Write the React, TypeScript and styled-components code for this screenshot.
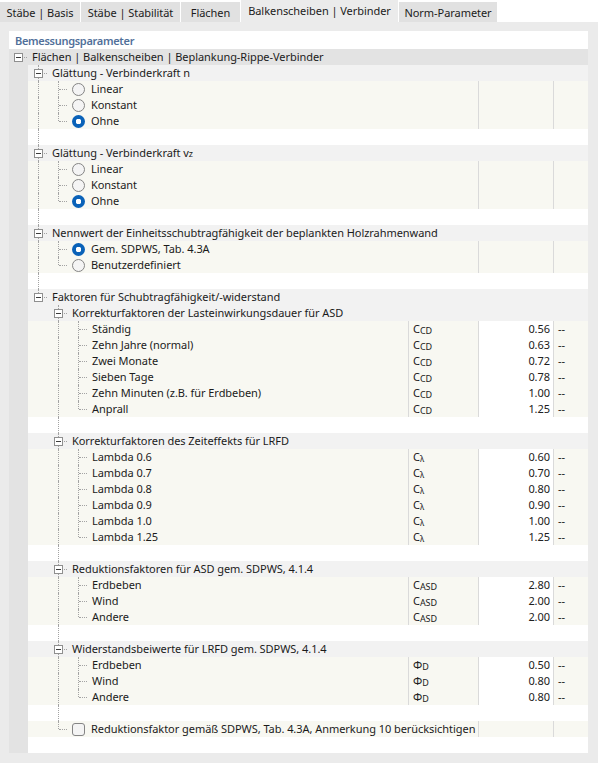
import React from 'react'
import styled, { createGlobalStyle, css } from 'styled-components'

const GlobalStyle = createGlobalStyle`
    * { box-sizing: border-box; }
    html, body {
        margin: 0;
        padding: 0;
        background: #ffffff;
    }
    body {
        font-family: 'Noto Sans', 'Open Sans', sans-serif;
        font-size: 11px;
        letter-spacing: -0.05px;
        color: #1b1b1b;
    }
`

type TreeNode = {
    label: React.ReactNode
    control?: 'radio' | 'check'
    checked?: boolean
    sym?: [string, string]
    value?: string
    children?: TreeNode[]
}

type FlatRow =
    | { kind: 'node'; depth: number; node: TreeNode; guides: boolean[]; hasNext: boolean }
    | { kind: 'spacer'; depth: number; guides: boolean[] }

const Window = styled.div`
    display: flex;
    flex-direction: column;
    width: 598px;
    height: 763px;
    overflow: hidden;
    background: #ffffff;
`

const TabBar = styled.div`
    display: flex;
    align-items: flex-end;
    gap: 1px;
    height: 22px;
    flex: none;
`

const Tab = styled.div<{ $active?: boolean; $w: number }>`
    display: flex;
    align-items: center;
    justify-content: center;
    width: ${p => p.$w}px;
    height: ${p => (p.$active ? 22 : 20)}px;
    padding-bottom: ${p => (p.$active ? 2 : 0)}px;
    background: ${p => (p.$active ? '#ebebeb' : '#e1e1e1')};
    white-space: nowrap;
`

const Panel = styled.div`
    flex: 1;
    display: flex;
    flex-direction: column;
    background: #ebebeb;
    padding: 9px 10px 10px 9px;
`

const Sheet = styled.div`
    flex: 1;
    display: flex;
    flex-direction: column;
    background: #ffffff;
`

const SheetTitle = styled.div`
    display: flex;
    align-items: center;
    height: 18px;
    padding-left: 6px;
    color: #51709a;
    font-weight: 600;
    letter-spacing: -0.3px;
`

const toneBg = {
    root: '#e3e3e3',
    group: '#f2f2f2',
    leaf: '#f8f8f2',
    blank: '#ffffff',
}

const Row = styled.div<{ $tone: keyof typeof toneBg }>`
    display: flex;
    height: 16px;
    line-height: 16px;
    background: ${p => toneBg[p.$tone]};
`

const dotted = '1px dotted #a3a3a3'

const Cell = styled.div<{ $first?: boolean; $gutter?: boolean; $line?: boolean }>`
    position: relative;
    flex: none;
    display: flex;
    align-items: center;
    width: ${p => (p.$first ? 19 : 20)}px;
    height: 100%;
    background: ${p => (p.$gutter ? toneBg.root : 'transparent')};
    ${p =>
        p.$line &&
        css`
            &::before {
                content: '';
                position: absolute;
                top: 0;
                bottom: 0;
                left: ${p.$first ? 9 : 10}px;
                border-left: ${dotted};
            }
        `}
`

const NodeCell = styled(Cell)<{ $up?: boolean; $down?: boolean }>`
    ${p =>
        (p.$up || p.$down) &&
        css`
            &::before {
                content: '';
                position: absolute;
                top: ${p.$up ? 0 : 8}px;
                bottom: ${p.$down ? 0 : 8}px;
                left: ${p.$first ? 9 : 10}px;
                border-left: ${dotted};
            }
        `}
    &::after {
        content: '';
        position: absolute;
        top: 8px;
        left: ${p => (p.$first ? 10 : 11)}px;
        right: 1px;
        border-top: ${dotted};
    }
`

const Expander = styled.span<{ $first?: boolean }>`
    position: relative;
    z-index: 1;
    width: 9px;
    height: 9px;
    margin-left: ${p => (p.$first ? 5 : 6)}px;
    border: 1px solid #8f8f8f;
    background: #ffffff;

    &::after {
        content: '';
        position: absolute;
        left: 1px;
        right: 1px;
        top: 3px;
        height: 1px;
        background: #3c3c3c;
    }
`

const Name = styled.div`
    flex: 1;
    min-width: 0;
    display: flex;
    align-items: center;
    padding-left: 4px;
    white-space: nowrap;
    overflow: hidden;
`

const Radio = styled.span<{ $on?: boolean }>`
    flex: none;
    width: 13px;
    height: 13px;
    margin-right: 6px;
    border-radius: 50%;
    ${p =>
        p.$on
            ? css`
                  background: radial-gradient(circle, #ffffff 0 2.6px, #0a62b8 3px);
              `
            : css`
                  border: 1px solid #858585;
                  background: #f4f4f4;
              `}
`

const Check = styled.span`
    flex: none;
    width: 13px;
    height: 13px;
    margin-right: 6px;
    border: 1px solid #858585;
    border-radius: 3px;
    background: #f4f4f4;
`

const Column = styled.div<{ $w: number; $white?: boolean; $align?: 'left' | 'right' }>`
    flex: none;
    width: ${p => p.$w}px;
    height: 100%;
    border-left: 1px solid #dadada;
    background: ${p => (p.$white ? '#ffffff' : 'transparent')};
    text-align: ${p => p.$align || 'left'};
    padding: ${p => (p.$align === 'right' ? '0 3px 0 0' : '0 0 0 4px')};
    white-space: nowrap;
    color: #202020;
`

const Sub = styled.span<{ $size?: number }>`
    font-size: ${p => p.$size || 9}px;
    position: relative;
    top: 1px;
`

const radios = (labels: string[], on: number): TreeNode[] =>
    labels.map((label, i) => ({ label, control: 'radio', checked: i === on }))

const factors = (sym: [string, string], items: [string, string][]): TreeNode[] =>
    items.map(([label, value]) => ({ label, sym, value }))

const tree: TreeNode[] = [
    {
        label: 'Flächen | Balkenscheiben | Beplankung-Rippe-Verbinder',
        children: [
            { label: 'Glättung - Verbinderkraft n', children: radios(['Linear', 'Konstant', 'Ohne'], 2) },
            {
                label: <>Glättung - Verbinderkraft v<Sub>z</Sub></>,
                children: radios(['Linear', 'Konstant', 'Ohne'], 2),
            },
            {
                label: 'Nennwert der Einheitsschubtragfähigkeit der beplankten Holzrahmenwand',
                children: radios(['Gem. SDPWS, Tab. 4.3A', 'Benutzerdefiniert'], 0),
            },
            {
                label: 'Faktoren für Schubtragfähigkeit/-widerstand',
                children: [
                    {
                        label: 'Korrekturfaktoren der Lasteinwirkungsdauer für ASD',
                        children: factors(['C', 'CD'], [
                            ['Ständig', '0.56'],
                            ['Zehn Jahre (normal)', '0.63'],
                            ['Zwei Monate', '0.72'],
                            ['Sieben Tage', '0.78'],
                            ['Zehn Minuten (z.B. für Erdbeben)', '1.00'],
                            ['Anprall', '1.25'],
                        ]),
                    },
                    {
                        label: 'Korrekturfaktoren des Zeiteffekts für LRFD',
                        children: factors(['C', 'λ'], [
                            ['Lambda 0.6', '0.60'],
                            ['Lambda 0.7', '0.70'],
                            ['Lambda 0.8', '0.80'],
                            ['Lambda 0.9', '0.90'],
                            ['Lambda 1.0', '1.00'],
                            ['Lambda 1.25', '1.25'],
                        ]),
                    },
                    {
                        label: 'Reduktionsfaktoren für ASD gem. SDPWS, 4.1.4',
                        children: factors(['C', 'ASD'], [
                            ['Erdbeben', '2.80'],
                            ['Wind', '2.00'],
                            ['Andere', '2.00'],
                        ]),
                    },
                    {
                        label: 'Widerstandsbeiwerte für LRFD gem. SDPWS, 4.1.4',
                        children: factors(['Φ', 'D'], [
                            ['Erdbeben', '0.50'],
                            ['Wind', '0.80'],
                            ['Andere', '0.80'],
                        ]),
                    },
                    {
                        label: 'Reduktionsfaktor gemäß SDPWS, Tab. 4.3A, Anmerkung 10 berücksichtigen',
                        control: 'check',
                    },
                ],
            },
        ],
    },
]

function flatten(nodes: TreeNode[], depth: number, guides: boolean[], out: FlatRow[]) {
    nodes.forEach((node, i) => {
        const hasNext = i < nodes.length - 1
        out.push({ kind: 'node', depth, node, guides, hasNext })
        if (node.children) {
            flatten(node.children, depth + 1, [...guides, hasNext], out)
            if (depth > 0) out.push({ kind: 'spacer', depth: depth + 1, guides: [...guides, hasNext] })
        }
    })
    return out
}

const rows = flatten(tree, 0, [], [])

function Guides({ guides }: { guides: boolean[] }) {
    return (
        <>
            {guides.map((line, i) => (
                <Cell key={i} $first={i === 0} $gutter={i === 0} $line={line} />
            ))}
        </>
    )
}

function TreeRow({ row }: { row: FlatRow }) {
    if (row.kind === 'spacer') {
        return (
            <Row $tone="blank">
                <Guides guides={row.guides} />
            </Row>
        )
    }
    const { node, depth, guides, hasNext } = row
    const isGroup = !!node.children
    const tone = isGroup ? (depth === 0 ? 'root' : 'group') : 'leaf'
    const first = depth === 0
    return (
        <Row $tone={tone}>
            <Guides guides={guides} />
            <NodeCell $first={first} $up={depth > 0} $down={hasNext}>
                {isGroup && <Expander $first={first} />}
            </NodeCell>
            <Name>
                {node.control === 'radio' && <Radio $on={node.checked} />}
                {node.control === 'check' && <Check />}
                {node.label}
            </Name>
            {!isGroup && (
                <>
                    {node.sym && (
                        <Column $w={70}>
                            {node.sym[0]}
                            <Sub $size={node.sym[1] === 'λ' ? 8 : 9}>{node.sym[1]}</Sub>
                        </Column>
                    )}
                    <Column $w={75} $white={!!node.value} $align="right">
                        {node.value}
                    </Column>
                    <Column $w={35}>{node.value ? '--' : ''}</Column>
                </>
            )}
        </Row>
    )
}

const tabs = [
    { label: 'Stäbe | Basis', w: 80 },
    { label: 'Stäbe | Stabilität', w: 99 },
    { label: 'Flächen', w: 59 },
    { label: 'Balkenscheiben | Verbinder', w: 157, active: true },
    { label: 'Norm-Parameter', w: 98 },
]

export default function App() {
    return (
        <Window>
            <GlobalStyle />
            <TabBar>
                {tabs.map(t => (
                    <Tab key={t.label} $w={t.w} $active={t.active}>
                        {t.label}
                    </Tab>
                ))}
            </TabBar>
            <Panel>
                <Sheet>
                    <SheetTitle>Bemessungsparameter</SheetTitle>
                    {rows.map((row, i) => (
                        <TreeRow key={i} row={row} />
                    ))}
                </Sheet>
            </Panel>
        </Window>
    )
}
